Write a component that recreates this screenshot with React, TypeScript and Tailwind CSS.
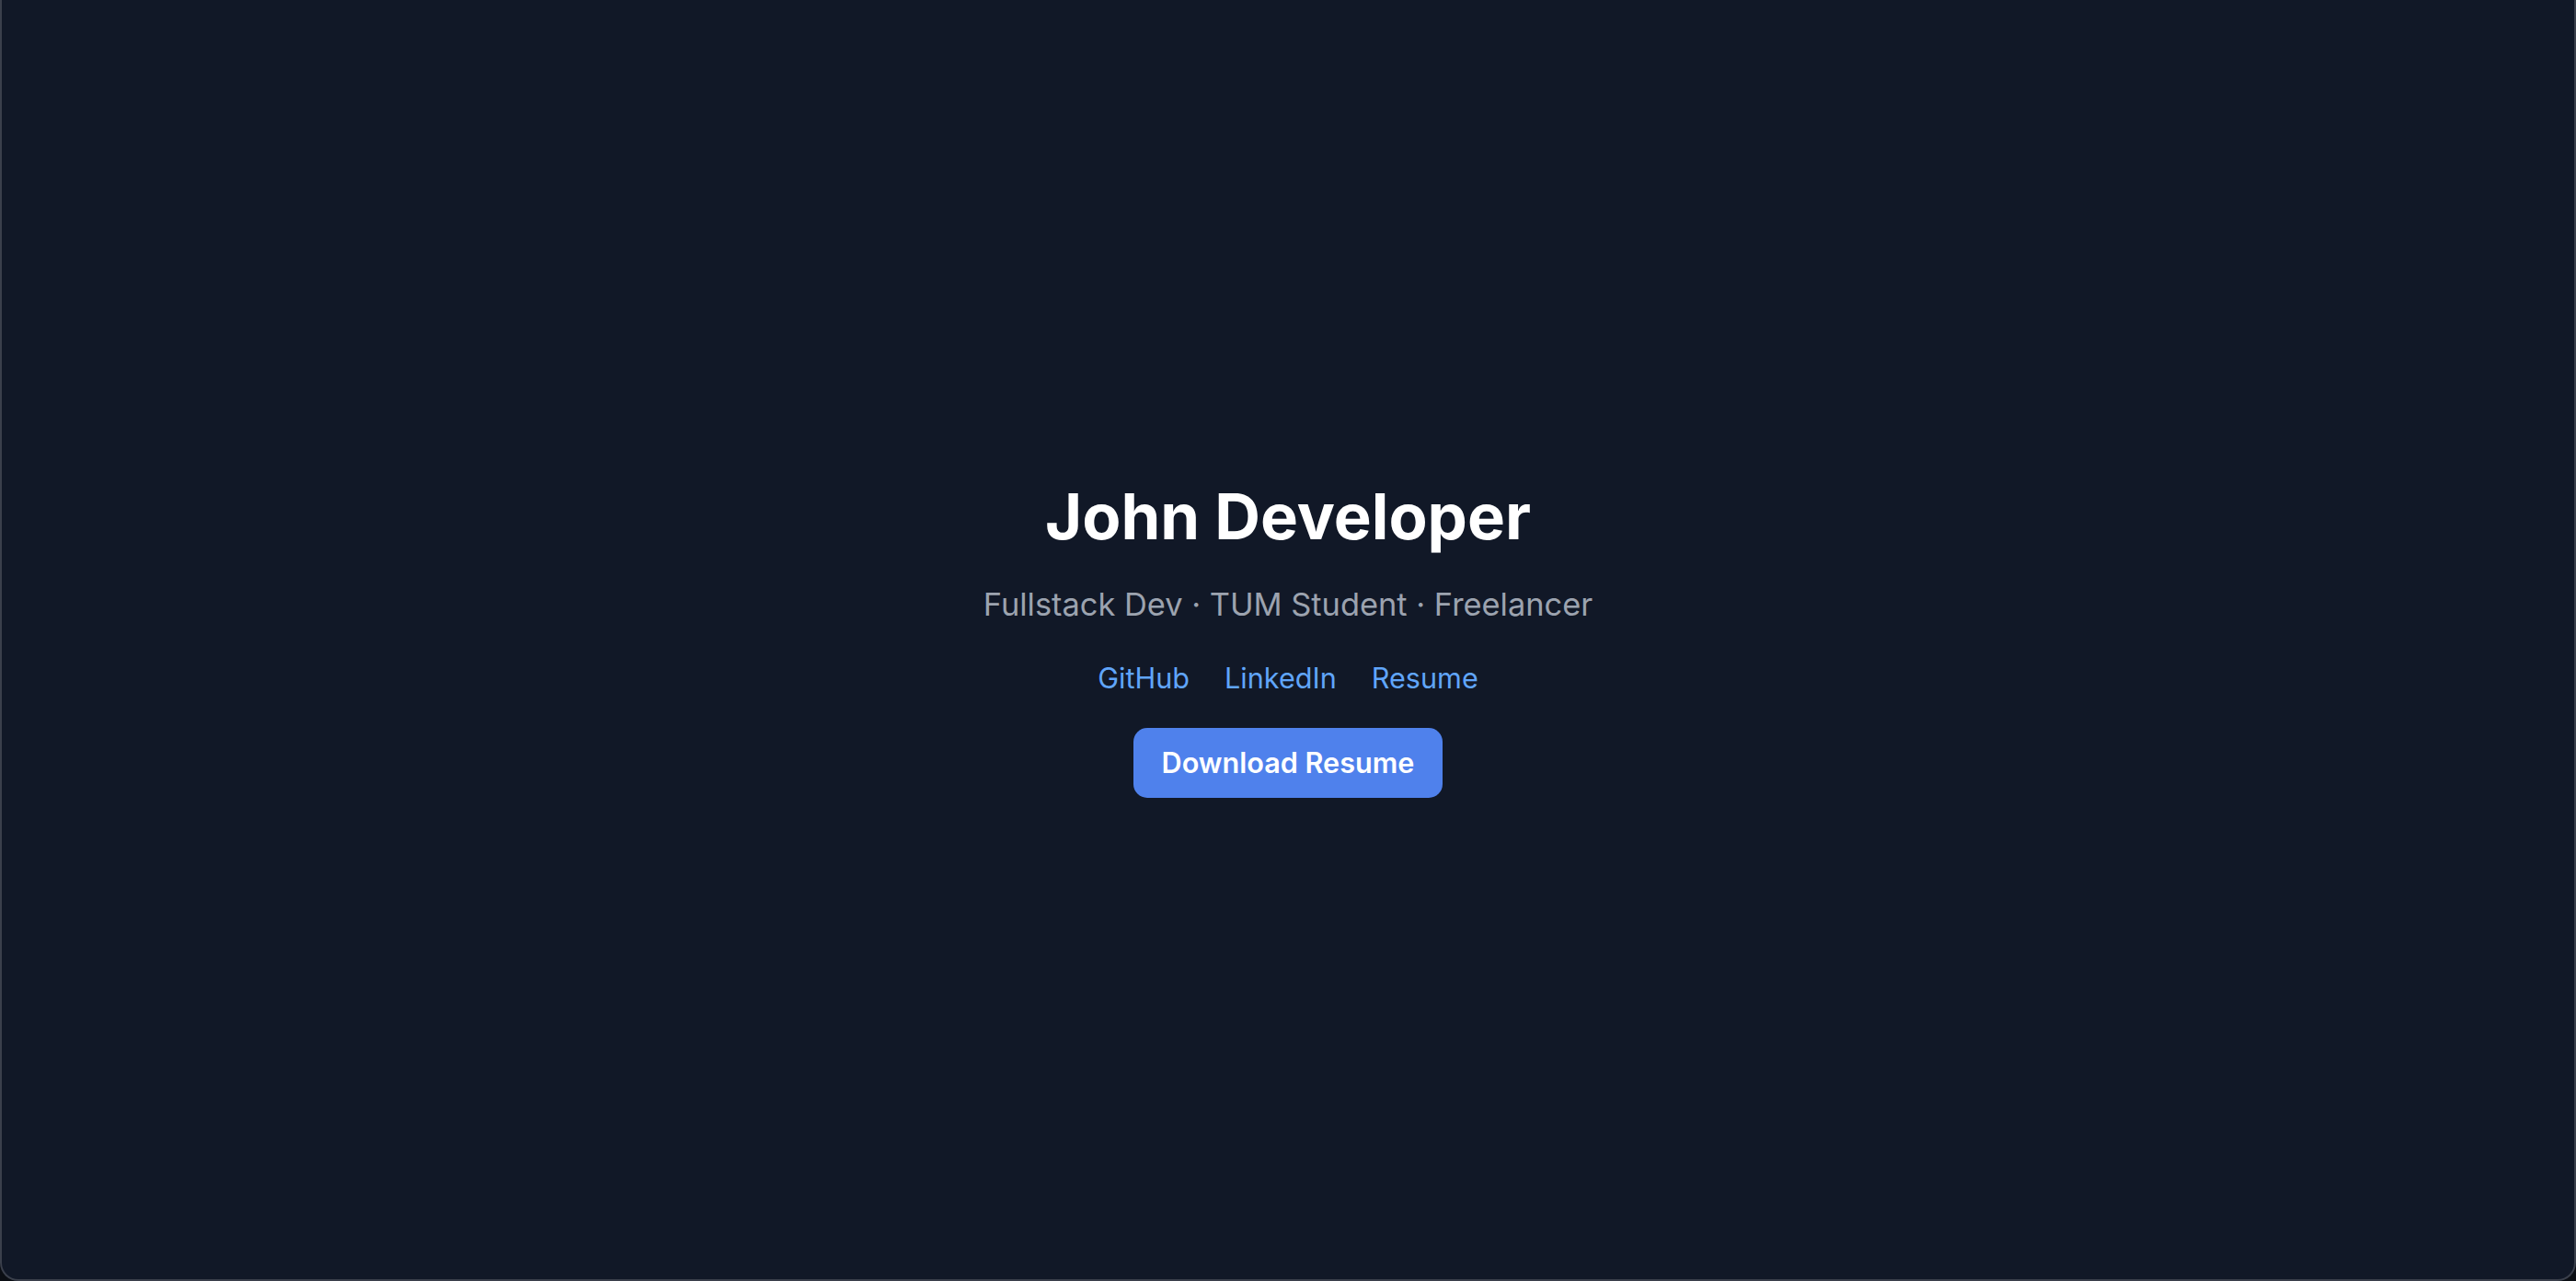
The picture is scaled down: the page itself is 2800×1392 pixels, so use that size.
import React from "react";

const links = ["GitHub", "LinkedIn", "Resume"];

export default function App() {
  return (
    <div
      className="h-screen w-full bg-[#0b0e14]"
      style={{ fontFamily: "Inter, 'Noto Sans', sans-serif" }}
    >
      <main className="flex h-full w-full items-center justify-center rounded-b-[20px] border-x-2 border-b-2 border-[#3a3f4b] bg-[#111827]">
        <div className="flex flex-col items-center text-center">
          {/* Name */}
          <h1 className="text-[68.8px] font-bold leading-[76.4px] text-white">
            John Developer
          </h1>

          {/* Tagline */}
          <p className="mt-[30.6px] text-[34.4px] leading-[53.5px] text-[#9ca3af]">
            Fullstack Dev · TUM Student · Freelancer
          </p>

          {/* Links */}
          <div className="mt-[30.6px] flex gap-[38px]">
            {links.map((l) => (
              <a
                key={l}
                href="#"
                className="text-[30.6px] leading-[45.8px] text-[#60a5fa] hover:underline"
              >
                {l}
              </a>
            ))}
          </div>

          {/* CTA */}
          <a
            href="#"
            className="mt-[30.6px] flex h-[76.4px] items-center rounded-[15px] bg-[#4f81ec] px-[30.6px] text-[30.6px] font-semibold text-white hover:bg-[#3b6fe0]"
          >
            Download Resume
          </a>
        </div>
      </main>
    </div>
  );
}
